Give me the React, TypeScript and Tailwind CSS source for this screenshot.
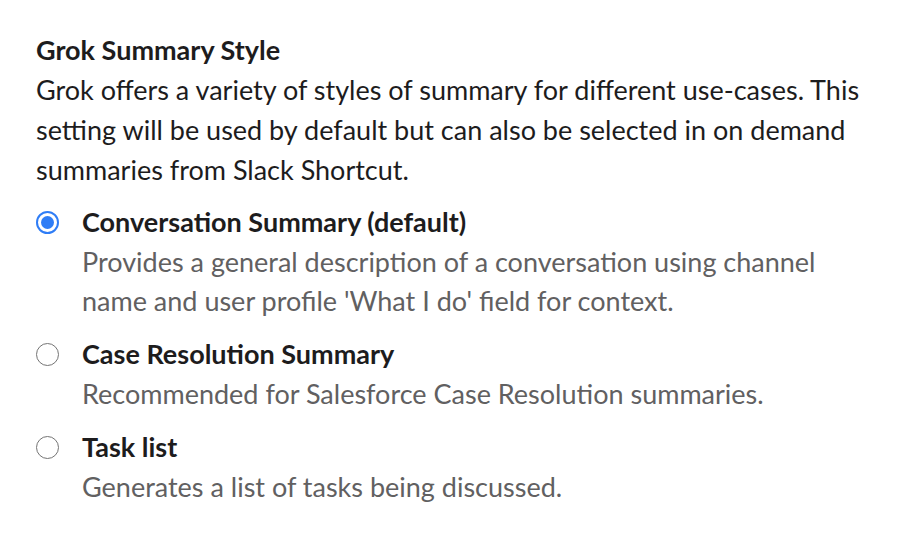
import React from 'react';

interface Option {
  title: string;
  description: string;
  selected?: boolean;
}

const options: Option[] = [
  {
    title: 'Conversation Summary (default)',
    description: "Provides a general description of a conversation using channel name and user profile 'What I do' field for context.",
    selected: true,
  },
  {
    title: 'Case Resolution Summary',
    description: 'Recommended for Salesforce Case Resolution summaries.',
  },
  {
    title: 'Task list',
    description: 'Generates a list of tasks being discussed.',
  },
];

function Radio({ selected }: { selected?: boolean }) {
  if (selected) {
    return (
      <div className="w-[23px] h-[23px] rounded-full border-2 border-[#2f7df6] bg-white flex items-center justify-center">
        <div className="w-[13px] h-[13px] rounded-full bg-[#2f7df6]" />
      </div>
    );
  }
  return <div className="w-[23px] h-[23px] rounded-full border-[1.5px] border-[#747474] bg-white" />;
}

export default function App() {
  return (
    <div className="w-[898px] h-[534px] bg-white pt-[30px] pl-[36px] pr-[30px] font-['Lato','Noto_Sans',sans-serif] text-[27px] leading-[40px]">
      {/* Heading */}
      <h2 className="font-bold text-[#1d1c1d]">Grok Summary Style</h2>
      <p className="text-[#1d1c1d]">
        Grok offers a variety of styles of summary for different use-cases. This setting will be used by default but can also be selected in on demand summaries from Slack Shortcut.
      </p>

      {/* Options */}
      <div className="mt-[12px] flex flex-col gap-[14px]">
        {options.map((opt, idx) => (
          <div key={idx} className="flex items-start gap-[23px]">
            <div className="h-[40px] flex items-center">
              <Radio selected={opt.selected} />
            </div>
            <div className="flex-1">
              <div className="font-bold text-[#1d1c1d]">{opt.title}</div>
              <div className="text-[#616061] leading-[39px]">{opt.description}</div>
            </div>
          </div>
        ))}
      </div>
    </div>
  );
}
